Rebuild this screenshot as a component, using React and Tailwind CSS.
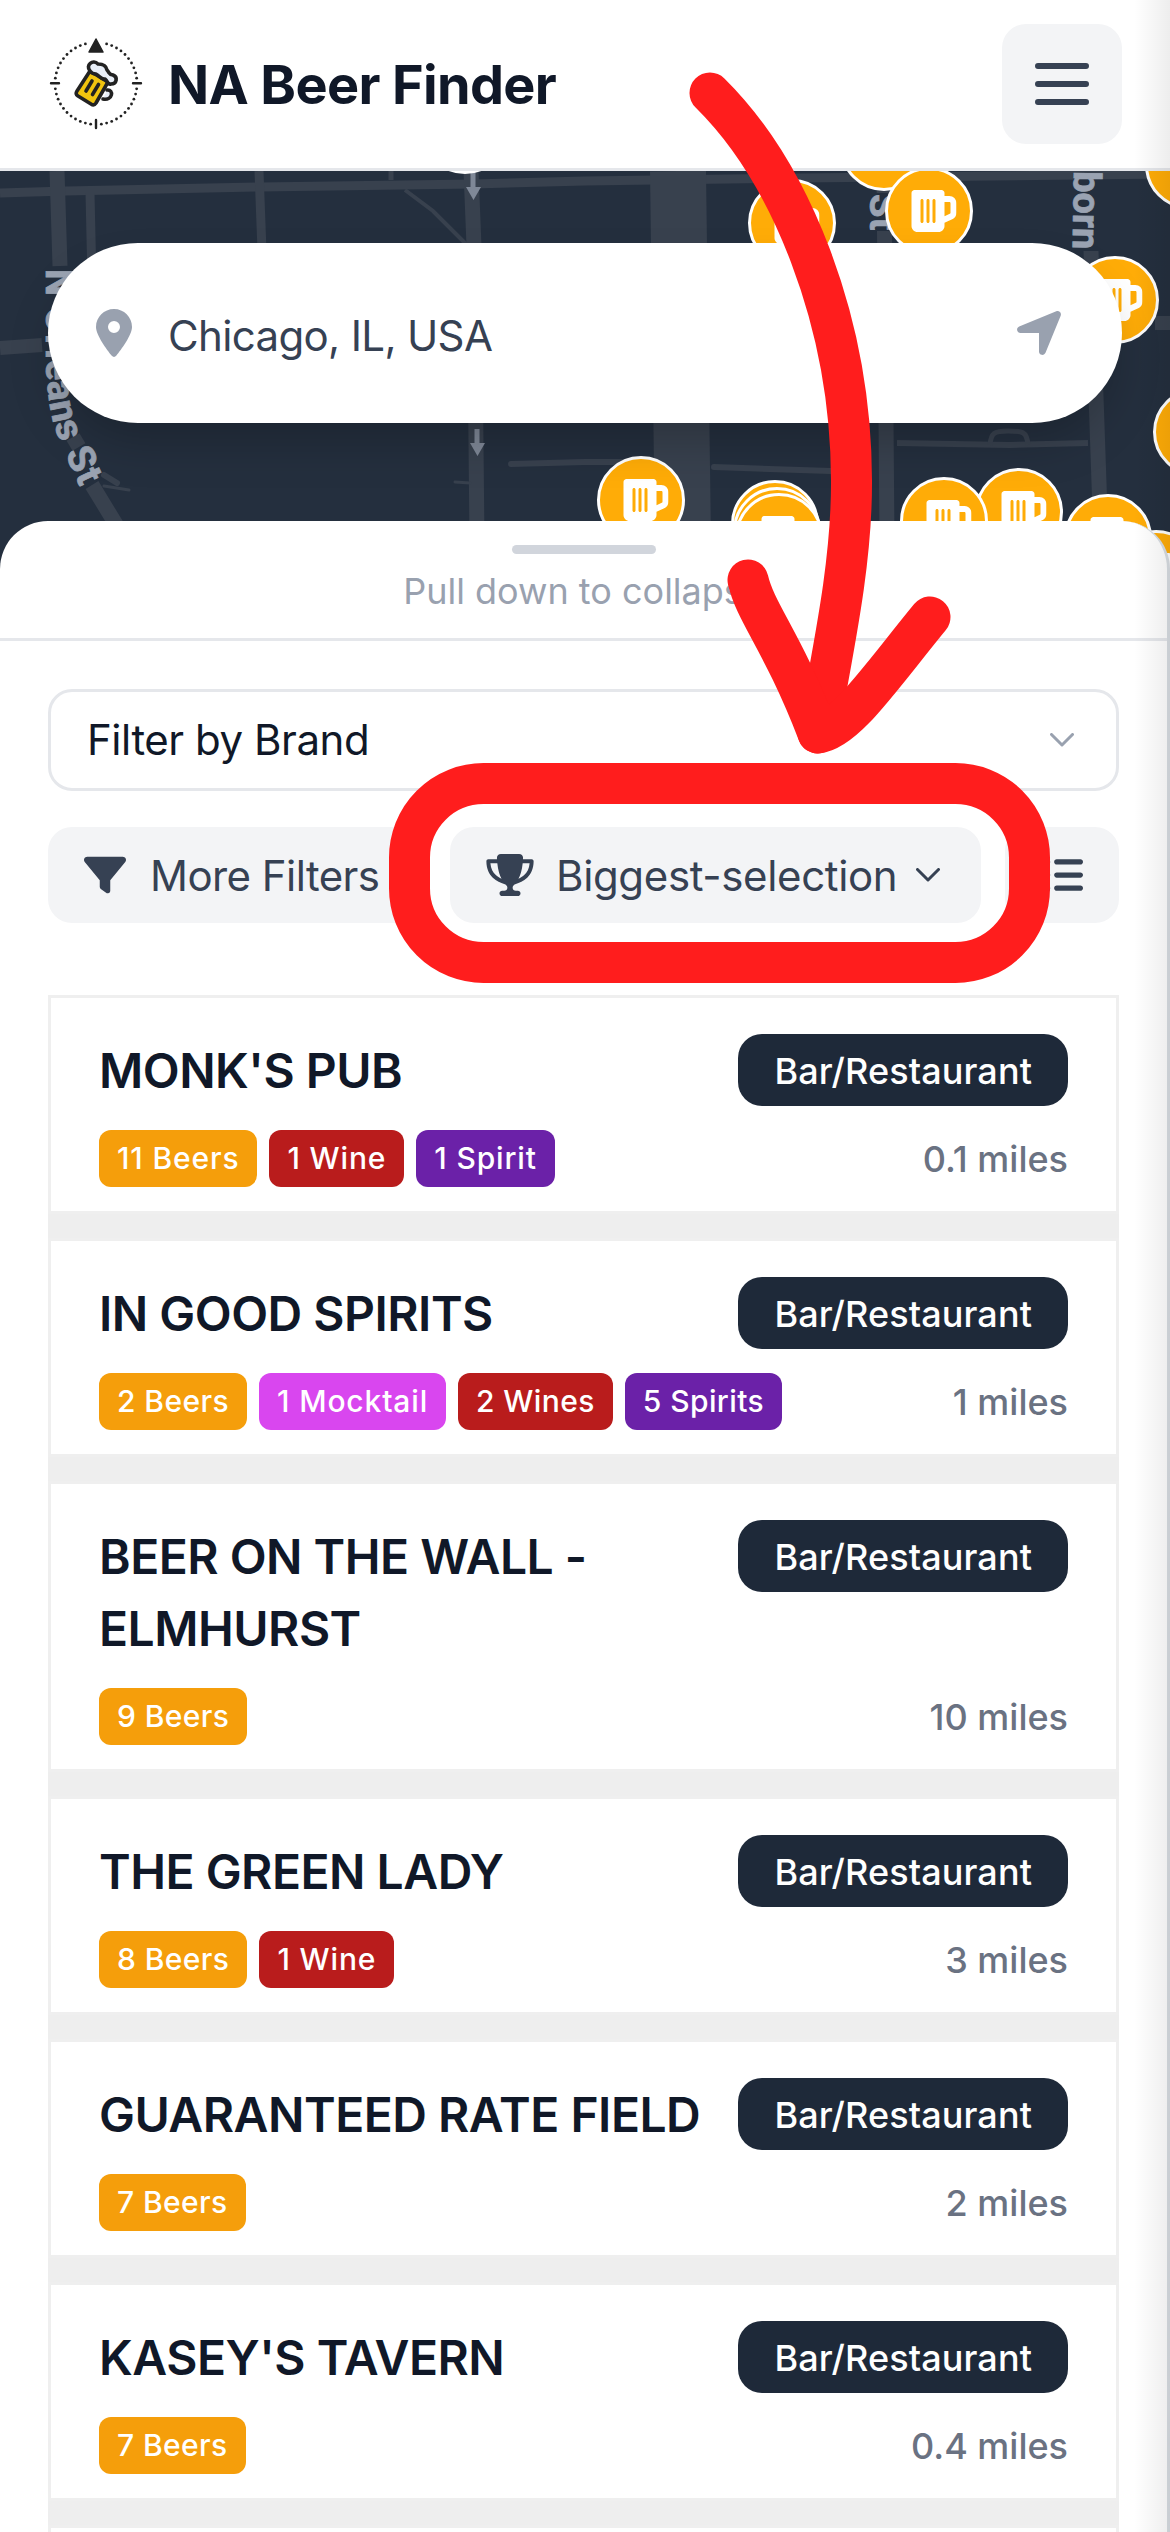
import { FaBeerMugEmpty, FaFilter, FaListUl, FaLocationArrow, FaLocationDot, FaTrophy } from "react-icons/fa6"

const VENUES = [
  { name: "MONK'S PUB", distance: "0.1 miles", tags: [["beer", "11 Beers"], ["wine", "1 Wine"], ["spirit", "1 Spirit"]] },
  { name: "IN GOOD SPIRITS", distance: "1 miles", tags: [["beer", "2 Beers"], ["mocktail", "1 Mocktail"], ["wine", "2 Wines"], ["spirit", "5 Spirits"]] },
  { name: "BEER ON THE WALL - ELMHURST", distance: "10 miles", tags: [["beer", "9 Beers"]] },
  { name: "THE GREEN LADY", distance: "3 miles", tags: [["beer", "8 Beers"], ["wine", "1 Wine"]] },
  { name: "GUARANTEED RATE FIELD", distance: "2 miles", tags: [["beer", "7 Beers"]] },
  { name: "KASEY'S TAVERN", distance: "0.4 miles", tags: [["beer", "7 Beers"]] },
]

const TAG_COLORS = {
  beer: "bg-[#f59e0b]",
  wine: "bg-[#b91c1c]",
  spirit: "bg-[#6b21a8]",
  mocktail: "bg-[#d946ef]",
}

// marker centres, back to front
const MARKERS = [
  [465, -41], [884, -24], [929, 40], [792, 52], [1189, -6], [1115, 129], [1197, 261],
  [641, 329], [775, 353], [777, 360], [779, 366], [1019, 341], [944, 350], [1108, 367], [1156, 403],
]

function Logo() {
  const dots = []
  for (let a = 0; a < 360; a += 7.5) {
    if (a % 90 !== 0 && a !== 7.5 && a !== 352.5) dots.push(a)
  }
  return (
    <svg width="96" height="96" viewBox="48 36 96 96" fill="none">
      {dots.map((a) => (
        <circle key={a} cx={96 + 41 * Math.sin(a * Math.PI / 180)} cy={83.5 - 41 * Math.cos(a * Math.PI / 180)} r="1.4" fill="#222" />
      ))}
      <path d="M96 39L103 52H89Z" fill="#222" stroke="#222" strokeWidth="1.5" strokeLinejoin="round" />
      <path d="M51 83.2H59M133 83.2H141M96 120V128" stroke="#222" strokeWidth="2.4" strokeLinecap="round" />
      <g stroke="#222" strokeWidth="3.6" strokeLinejoin="round" strokeLinecap="round">
        <path d="M107 90C114 89 113 101 103 99" fill="#e8eef7" />
        <path d="M90 71L108 82L96 103Q94 106 91 104L78 96Q75 94 77 91Z" fill="#f1c40f" />
        <path d="M90 71C85 65 93 59 98 64C101 64 106 64 107 70C110 73 108 74 113 75C118 77 117 84 111 84C107 85 108 81 105 79C101 80 100 76 96 74C94 74 92 74 90 71Z" fill="#e8eef7" />
        <path d="M92 81L86 91M98.5 84.5L92.5 94.5" />
      </g>
    </svg>
  )
}

function Marker({ x, y }) {
  return (
    <g>
      <circle cx={x} cy={y} r="42.5" fill="#ffac07" stroke="#fff" strokeWidth="3" />
      <FaBeerMugEmpty x={x - 20.5} y={y - 24} size={48} color="#fff" />
    </g>
  )
}

function CityMap() {
  return (
    <svg className="absolute inset-0" width="1170" height="420" viewBox="0 0 1170 420" fill="none">
      <rect width="1170" height="420" fill="#242f3e" />
      <g stroke="#38414e">
        <path d="M0 22L66 20L260 16L473 13L585 10L800 7L1170 3" strokeWidth="9" />
        <path d="M57 0L60 95" strokeWidth="15" />
        <path d="M90 22L92 110M259 0L262 80" strokeWidth="9" />
        <path d="M391 0V9" strokeWidth="5" />
        <path d="M405 19L433 40L466 73" strokeWidth="4" />
        <path d="M471 0L474 75L477 370" strokeWidth="15" />
        <path d="M0 177L42 174M1155 152H1170" strokeWidth="14" />
        <path d="M73 266L79 276M92 314L120 360" strokeWidth="15" />
        <path d="M104 304L117 312" strokeWidth="6" strokeLinecap="round" />
        <path d="M104 315L129 319M455 311L470 312" strokeWidth="3" strokeLinecap="round" />
        <path d="M511 293L585 291H655M714 296L831 300" strokeWidth="6" strokeLinecap="round" />
        <path d="M678 0L683 370" strokeWidth="56" />
        <path d="M884 0L887 370M1088 0L1091 80L1101 370" strokeWidth="15" />
        <path d="M897 272L1010 274L1088 272" strokeWidth="6" />
        <path d="M990 274C991 262 994 260 1008 260C1022 260 1027 260 1028 274" strokeWidth="5" />
      </g>
      <g fill="#7f8897">
        <path d="M470.5 0H475.5V16H481L473.5 29L466 16H470.5Z" />
        <path d="M474.5 258H479.5V272H485L477.5 285L470 272H474.5Z" />
      </g>
      {/* keep the roads from running through the street names */}
      <path d="M878 22V60M1088 8V80" stroke="#242f3e" strokeWidth="24" />
      <g className="font-[Roboto,sans-serif] text-[38px] font-bold" fill="#9aa3b2" stroke="#9aa3b2" strokeWidth="0.8">
        <text transform="translate(870 23) rotate(90)">St</text>
        <text transform="translate(1074 0) rotate(91)">born</text>
        <path id="orleans" d="M46 98V190C47 225 52 250 57 262C62 275 72 300 88 332" stroke="none" fill="none" />
        <text><textPath href="#orleans" textLength="224">N Orleans St</textPath></text>
      </g>
      {MARKERS.map(([x, y]) => <Marker key={`${x}-${y}`} x={x} y={y} />)}
    </svg>
  )
}

function Chevron({ className }) {
  return (
    <svg className={className} width="24" height="14" viewBox="0 0 24 14" fill="none" stroke="currentColor" strokeWidth="3" strokeLinecap="round" strokeLinejoin="round">
      <path d="M1.5 1.5L12 12L22.5 1.5" />
    </svg>
  )
}

function Tag({ kind, label }) {
  const tracking = label.startsWith("1") ? "tracking-[0.85px]" : "tracking-[0.4px]"
  return (
    <span className={`${TAG_COLORS[kind]} ${tracking} h-[57px] rounded-xl px-[18px] text-[30px] leading-[57px] font-medium text-white`}>{label}</span>
  )
}

function VenueCard({ name, distance, tags }) {
  return (
    <li className="flex flex-col gap-6 border-[3px] border-[#efefef] bg-white px-12 pt-9 pb-6">
      <div className="flex items-start justify-between gap-6">
        <h2 className="max-w-[614px] pt-px text-[48px] leading-[72px] font-semibold tracking-[-0.5px] text-gray-900">{name}</h2>
        <span className="h-[72px] shrink-0 rounded-3xl bg-gray-800 px-9 text-[36px] leading-[74px] font-medium tracking-[0.1px] text-white">Bar/Restaurant</span>
      </div>
      <div className="-mt-px flex h-[57px] items-center justify-between">
        <div className="flex gap-3">
          {tags.map(([kind, label]) => <Tag key={kind} kind={kind} label={label} />)}
        </div>
        <span className="text-[36px] leading-[48px] font-medium text-gray-500">{distance}</span>
      </div>
    </li>
  )
}

// red arrow and ring pointing at the sort dropdown
function Highlight() {
  return (
    <svg className="pointer-events-none absolute inset-0" width="1170" height="1000" viewBox="0 0 1170 1000" fill="none" stroke="#ff1d1d" strokeWidth="41" strokeLinecap="round" strokeLinejoin="round">
      <path d="M710 93C790 172 851 320 851.5 480C852 560 835 640 818 733" />
      <path d="M748 580C756 614 782 640 818 733C845 730 880 678 930 617" />
      <rect x="409.5" y="783.5" width="620" height="179" rx="74" />
    </svg>
  )
}

export default function App() {
  return (
    <div className="relative h-[2532px] w-[1170px] overflow-hidden bg-white font-[Inter,sans-serif] antialiased">
      <header className="flex h-[171px] items-center justify-between border-b-[3px] border-gray-200 px-12">
        <div className="flex items-center gap-6">
          <Logo />
          <h1 className="pt-px text-[54px] leading-[72px] font-bold tracking-[-0.65px] text-gray-900">NA Beer Finder</h1>
        </div>
        <button className="flex size-[120px] items-center justify-center rounded-3xl bg-gray-100 text-gray-700">
          <svg width="54" height="42" viewBox="0 0 54 42" fill="none" stroke="currentColor" strokeWidth="6" strokeLinecap="round">
            <path d="M3 3H51M3 21H51M3 39H51" />
          </svg>
        </button>
      </header>

      <section className="relative h-[420px] pt-[72px] pl-12">
        <CityMap />
        <div className="relative flex h-[180px] w-[1074px] items-center rounded-full bg-white pr-14 pl-12 shadow-2xl">
          <FaLocationDot className="h-12 w-9 text-gray-400" />
          <span className="ml-9 flex-1 pt-1.5 text-[42px] leading-[60px] tracking-[-0.65px] text-gray-700">Chicago, IL, USA</span>
          <FaLocationArrow className="size-[54px] text-gray-400" />
        </div>
      </section>

      <main className="relative -mt-[70px] h-[2011px] rounded-t-[48px] border-r-[3px] border-[#d8dde2] bg-white">
        <div className="flex h-[120px] flex-col items-center border-b-[3px] border-gray-200 pt-6">
          <div className="h-[9px] w-36 rounded-full bg-gray-300" />
          <p className="mt-[13px] text-[36px] leading-[48px] text-gray-400">Pull down to collapse</p>
        </div>
        <div className="px-12 pt-12">
          <button className="flex h-[102px] w-full items-center justify-between rounded-3xl border-[3px] border-gray-200 pr-[42px] pb-0.5 pl-9 text-[42px] tracking-[-0.45px] text-gray-900">
            Filter by Brand
            <Chevron className="mt-0.5 text-gray-400" />
          </button>
          <div className="mt-9 flex h-24 gap-6 text-[42px] text-gray-700">
            <button className="flex w-[378px] items-center gap-6 rounded-3xl bg-gray-100 pl-9 tracking-[-0.55px]">
              <FaFilter className="size-[42px]" />
              More Filters
            </button>
            <button className="flex w-[531px] items-center rounded-3xl bg-gray-100 pl-9">
              <FaTrophy className="h-[42px] w-12" />
              <span className="ml-[22px] flex-1 text-left tracking-[-0.35px] whitespace-nowrap">Biggest-selection</span>
              <Chevron className="mr-[41px]" />
            </button>
            <button className="flex flex-1 items-center justify-center rounded-3xl bg-gray-100">
              <FaListUl className="size-[42px]" />
            </button>
          </div>
          <ul className="mt-[72px] flex flex-col gap-6 bg-[#eeeeee]">
            {VENUES.map((v) => <VenueCard key={v.name} {...v} />)}
            <li className="h-10 border-[3px] border-[#efefef] bg-white" />
          </ul>
        </div>
      </main>

      <div className="pointer-events-none absolute inset-y-0 right-0 w-9 bg-gradient-to-l from-black/7 to-transparent" />
      <Highlight />
    </div>
  )
}
